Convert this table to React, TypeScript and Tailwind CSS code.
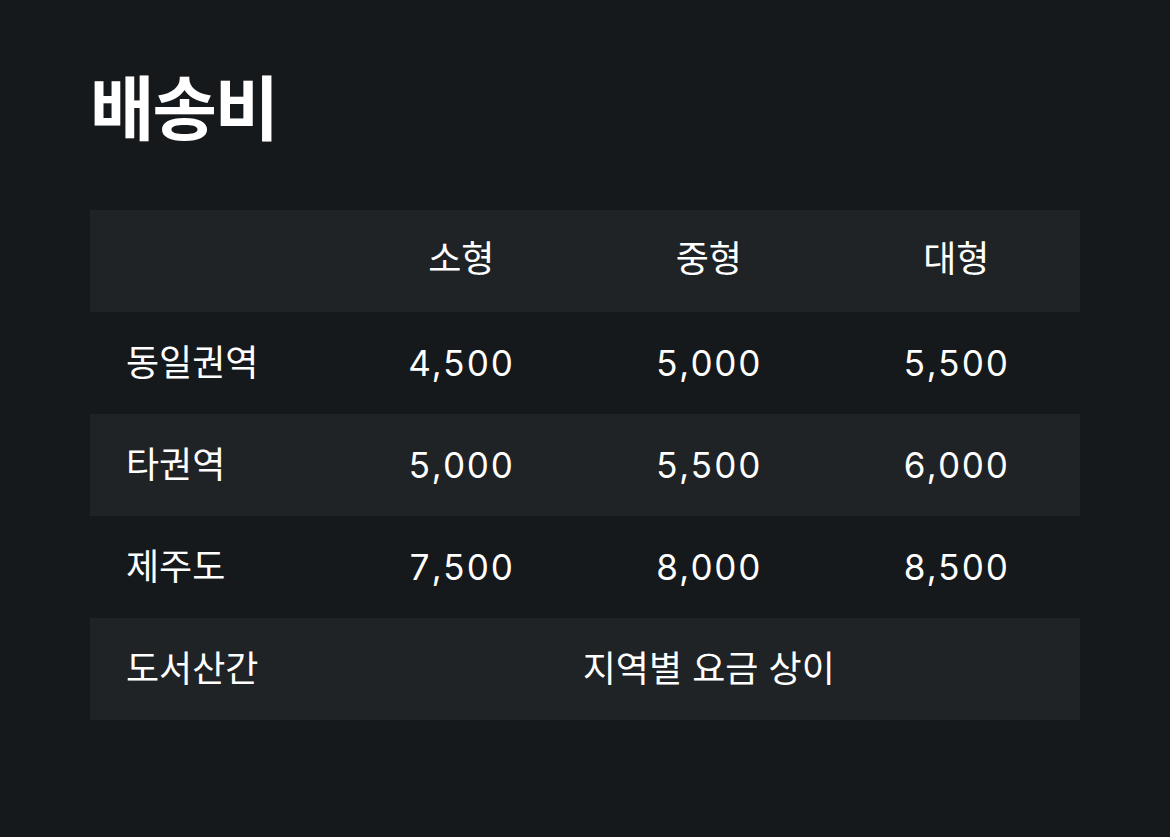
import React from 'react';

const rows = [
  { name: '동일권역', prices: ['4,500', '5,000', '5,500'] },
  { name: '타권역', prices: ['5,000', '5,500', '6,000'] },
  { name: '제주도', prices: ['7,500', '8,000', '8,500'] },
];

export default function App() {
  return (
    <div
      className="min-h-screen w-full bg-[#16191c] px-[90px] pt-[68px] text-white"
      style={{ fontFamily: 'Inter, "Noto Sans CJK KR", sans-serif' }}
    >
      <h1 className="text-[70px] font-bold leading-[84px] tracking-[-2px]">배송비</h1>

      <div className="mt-[58px] w-[990px] text-[36px]">
        <div className="grid h-[102px] grid-cols-4 items-center bg-[#202326] pb-[4px]">
          <div />
          <div className="text-center">소형</div>
          <div className="text-center">중형</div>
          <div className="text-center">대형</div>
        </div>
        {rows.map((row, i) => (
          <div
            key={row.name}
            className={
              'grid h-[102px] grid-cols-4 items-center ' +
              (i % 2 === 1 ? 'bg-[#202326]' : 'bg-transparent')
            }
          >
            <div className="pl-[36px]">{row.name}</div>
            {row.prices.map((p, j) => (
              <div key={j} className="text-center text-[35px] tabular-nums tracking-[1.2px]">
                {p}
              </div>
            ))}
          </div>
        ))}
        <div className="grid h-[102px] grid-cols-4 items-center bg-[#202326]">
          <div className="pl-[36px]">도서산간</div>
          <div className="col-span-3 text-center">지역별 요금 상이</div>
        </div>
      </div>
    </div>
  );
}
